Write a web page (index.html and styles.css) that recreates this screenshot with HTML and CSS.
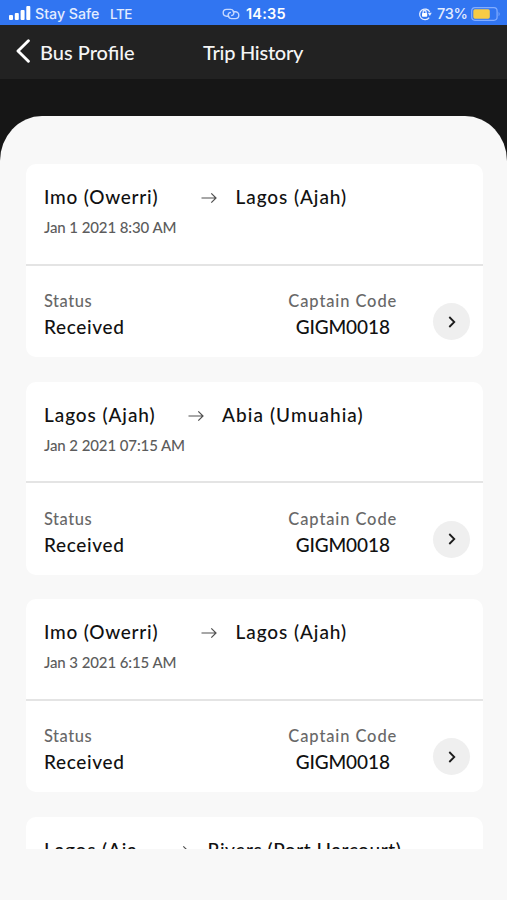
FILE: index.html
```html
<!DOCTYPE html>
<html lang="en">
<head>
<meta charset="utf-8">
<title>Trip History</title>
<link rel="stylesheet" href="styles.css">
</head>
<body>
<svg class="defs" width="0" height="0">
  <symbol id="arrow" viewBox="0 0 16 12"><path d="M.5 6H15M10.3 1.3 15 6l-4.7 4.7" fill="none" stroke="#505050" stroke-width="1.2"/></symbol>
  <symbol id="chevron" viewBox="0 0 8 12"><path d="M1.3 1 6.3 6l-5 5" fill="none" stroke="#1c1c1c" stroke-width="1.8"/></symbol>
</svg>
<div class="screen">
  <header class="status-bar">
    <svg class="signal" viewBox="0 0 22 14"><g fill="#fff"><rect x="0" y="9" width="4" height="5" rx="1"/><rect x="5.8" y="7" width="4" height="7" rx="1"/><rect x="11.6" y="4" width="4" height="10" rx="1"/><rect x="17.3" y="0" width="4" height="14" rx="1"/></g></svg>
    <span class="carrier">Stay Safe</span>
    <span class="network">LTE</span>
    <svg class="link" viewBox="0 0 18 12"><g fill="none" stroke="#c6d8ff" stroke-width="1.4" stroke-linecap="round"><path d="M6.8 8.2H4.6a3.4 3.4 0 0 1 0-6.8h4a3.4 3.4 0 0 1 2.9 5q-.6 1-1.8 1.1"/><path d="M11.2 3.8h2.2a3.4 3.4 0 0 1 0 6.8h-4a3.4 3.4 0 0 1-2.9-5q.6-1 1.8-1.1"/></g></svg>
    <span class="clock">14:35</span>
    <svg class="lock" viewBox="0 0 14 14"><g fill="none" stroke="#e3ecff" stroke-width="1.3"><path d="M11.2 10.6A5.3 5.3 0 1 1 11.7 5"/><path d="M5.1 6.5V5a1.5 1.5 0 0 1 3 0v1.5"/></g><rect x="4" y="6" width="5.2" height="3.8" rx=".7" fill="#fff"/><path d="M9.8 5.8h4L11.8 9z" fill="#e3ecff"/></svg>
    <span class="percent">73%</span>
    <svg class="battery" viewBox="0 0 30 14"><rect x=".7" y=".7" width="25.4" height="12.6" rx="3.2" fill="none" stroke="#83adff" stroke-width="1.2"/><rect x="2.3" y="2.3" width="16.5" height="9.4" rx="1.6" fill="#f7cb45"/><path d="M27.6 4.7q2 2.3 0 4.6z" fill="#83adff"/></svg>
  </header>
  <nav class="nav">
    <svg class="back" viewBox="0 0 14 24"><path d="M12.4 1.8 2 12l10.4 10.2" fill="none" stroke="#fff" stroke-width="2.9" stroke-linecap="round" stroke-linejoin="round"/></svg>
    <span class="back-label">Bus Profile</span>
    <h1 class="title">Trip History</h1>
  </nav>
  <main class="sheet">
    <div class="list">
      <article class="card">
        <div class="trip">
          <div class="route"><span class="from from-imo">Imo (Owerri)</span><svg class="arrow"><use href="#arrow"/></svg><span class="to to-lagos">Lagos (Ajah)</span></div>
          <p class="date">Jan 1 2021 8:30 AM</p>
        </div>
        <div class="details">
          <div class="field status"><span class="label">Status</span><span class="value">Received</span></div>
          <div class="field code"><span class="label">Captain Code</span><span class="value">GIGM0018</span></div>
          <span class="go"><svg><use href="#chevron"/></svg></span>
        </div>
      </article>
      <article class="card">
        <div class="trip">
          <div class="route"><span class="from from-lagos">Lagos (Ajah)</span><svg class="arrow"><use href="#arrow"/></svg><span class="to to-abia">Abia (Umuahia)</span></div>
          <p class="date">Jan 2 2021 07:15 AM</p>
        </div>
        <div class="details">
          <div class="field status"><span class="label">Status</span><span class="value">Received</span></div>
          <div class="field code"><span class="label">Captain Code</span><span class="value">GIGM0018</span></div>
          <span class="go"><svg><use href="#chevron"/></svg></span>
        </div>
      </article>
      <article class="card">
        <div class="trip">
          <div class="route"><span class="from from-imo">Imo (Owerri)</span><svg class="arrow"><use href="#arrow"/></svg><span class="to to-lagos">Lagos (Ajah)</span></div>
          <p class="date">Jan 3 2021 6:15 AM</p>
        </div>
        <div class="details">
          <div class="field status"><span class="label">Status</span><span class="value">Received</span></div>
          <div class="field code"><span class="label">Captain Code</span><span class="value">GIGM0018</span></div>
          <span class="go"><svg><use href="#chevron"/></svg></span>
        </div>
      </article>
      <article class="card">
        <div class="trip">
          <div class="route"><span class="from from-cut">Lagos (Aja</span><svg class="arrow"><use href="#arrow"/></svg><span class="to to-rivers">Rivers (Port Harcourt)</span></div>
        </div>
      </article>
    </div>
  </main>
</div>
</body>
</html>
```
FILE: styles.css
```css
* { box-sizing: border-box; }
body { margin: 0; font-family: Lato, "Liberation Sans", sans-serif; font-weight: 500; }
.defs { display: block; height: 0; }
.screen { width: 507px; height: 900px; background: #161616; overflow: hidden; display: flex; flex-direction: column; }
.status-bar { height: 25px; background: #3175f1; color: #e3ecff; display: flex; align-items: center; font-family: Inter, sans-serif; font-size: 14px; line-height: 20px; padding: 3px 0 0 9px; white-space: nowrap; flex: none; }
.status-bar svg { flex: none; }
.signal { width: 22px; height: 14px; margin-top: -3px; }
.carrier { width: 75px; margin-left: 4px; font-size: 14.2px; }
.network { width: 112px; font-size: 13.5px; letter-spacing: -0.4px; }
.link { width: 18px; height: 12px; }
.clock { width: 172px; margin-left: 6px; color: #fff; font-size: 14.5px; font-weight: 600; letter-spacing: 0.2px; }
.lock { width: 14px; height: 14px; }
.percent { width: 34px; margin-left: 5px; font-size: 14.5px; letter-spacing: -0.3px; }
.battery { width: 30px; height: 14px; }
.nav { height: 54px; flex: none; background: #222; color: #f5f5f5; display: flex; align-items: center; padding: 0 0 0 16px; font-size: 20px; line-height: 26px; white-space: nowrap; }
.back { width: 14px; height: 24px; margin-top: -2px; }
.back-label { width: 163px; margin-left: 10px; }
.title { margin: 0; font-size: 20px; font-weight: 500; letter-spacing: -0.25px; }
.sheet { margin-top: 37px; height: 784px; flex: none; background: #f8f8f8; border-radius: 42px 42px 0 0 / 45px 45px 0 0; padding: 48.2px 24px 0 25.5px; }
.list { height: 684.8px; overflow: hidden; display: flex; flex-direction: column; gap: 24.5px; }
.card { height: 193px; flex: none; background: #fff; border-radius: 10px; display: flex; flex-direction: column; color: #111; }
.trip { height: 101.5px; border-bottom: 2px solid #e4e4e4; padding: 20px 0 0 18.5px; }
.route { height: 26px; display: flex; align-items: center; font-size: 19px; line-height: 26px; white-space: nowrap; }
.from-imo { width: 157px; letter-spacing: 0.77px; }
.from-lagos { width: 143.5px; letter-spacing: 0.93px; }
.from-cut { width: 129px; letter-spacing: 0.85px; }
.to-lagos { letter-spacing: 0.93px; }
.to-abia { letter-spacing: 1.08px; }
.to-rivers { letter-spacing: 0.57px; }
.arrow { width: 16px; height: 12px; margin: 2px 18.5px 0 0; flex: none; }
.date { margin: 7px 0 0; font-size: 15px; line-height: 20px; letter-spacing: -0.1px; color: #5c5c5c; }
.details { height: 91.5px; display: flex; padding: 23.5px 13px 0 18.5px; }
.field { display: flex; flex-direction: column; white-space: nowrap; }
.label { font-size: 16.5px; line-height: 24px; color: #686868; letter-spacing: 0.5px; }
.value { font-size: 19px; line-height: 28px; letter-spacing: 0.65px; }
.status { width: 244.5px; }
.code { width: 108.5px; align-items: center; }
.code .label { letter-spacing: 0.88px; }
.code .value { letter-spacing: -0.1px; }
.go { width: 37px; height: 37px; margin: 14px 0 0 auto; border-radius: 50%; background: #efefef; display: grid; place-items: center; }
.go svg { width: 8px; height: 12px; }
```
